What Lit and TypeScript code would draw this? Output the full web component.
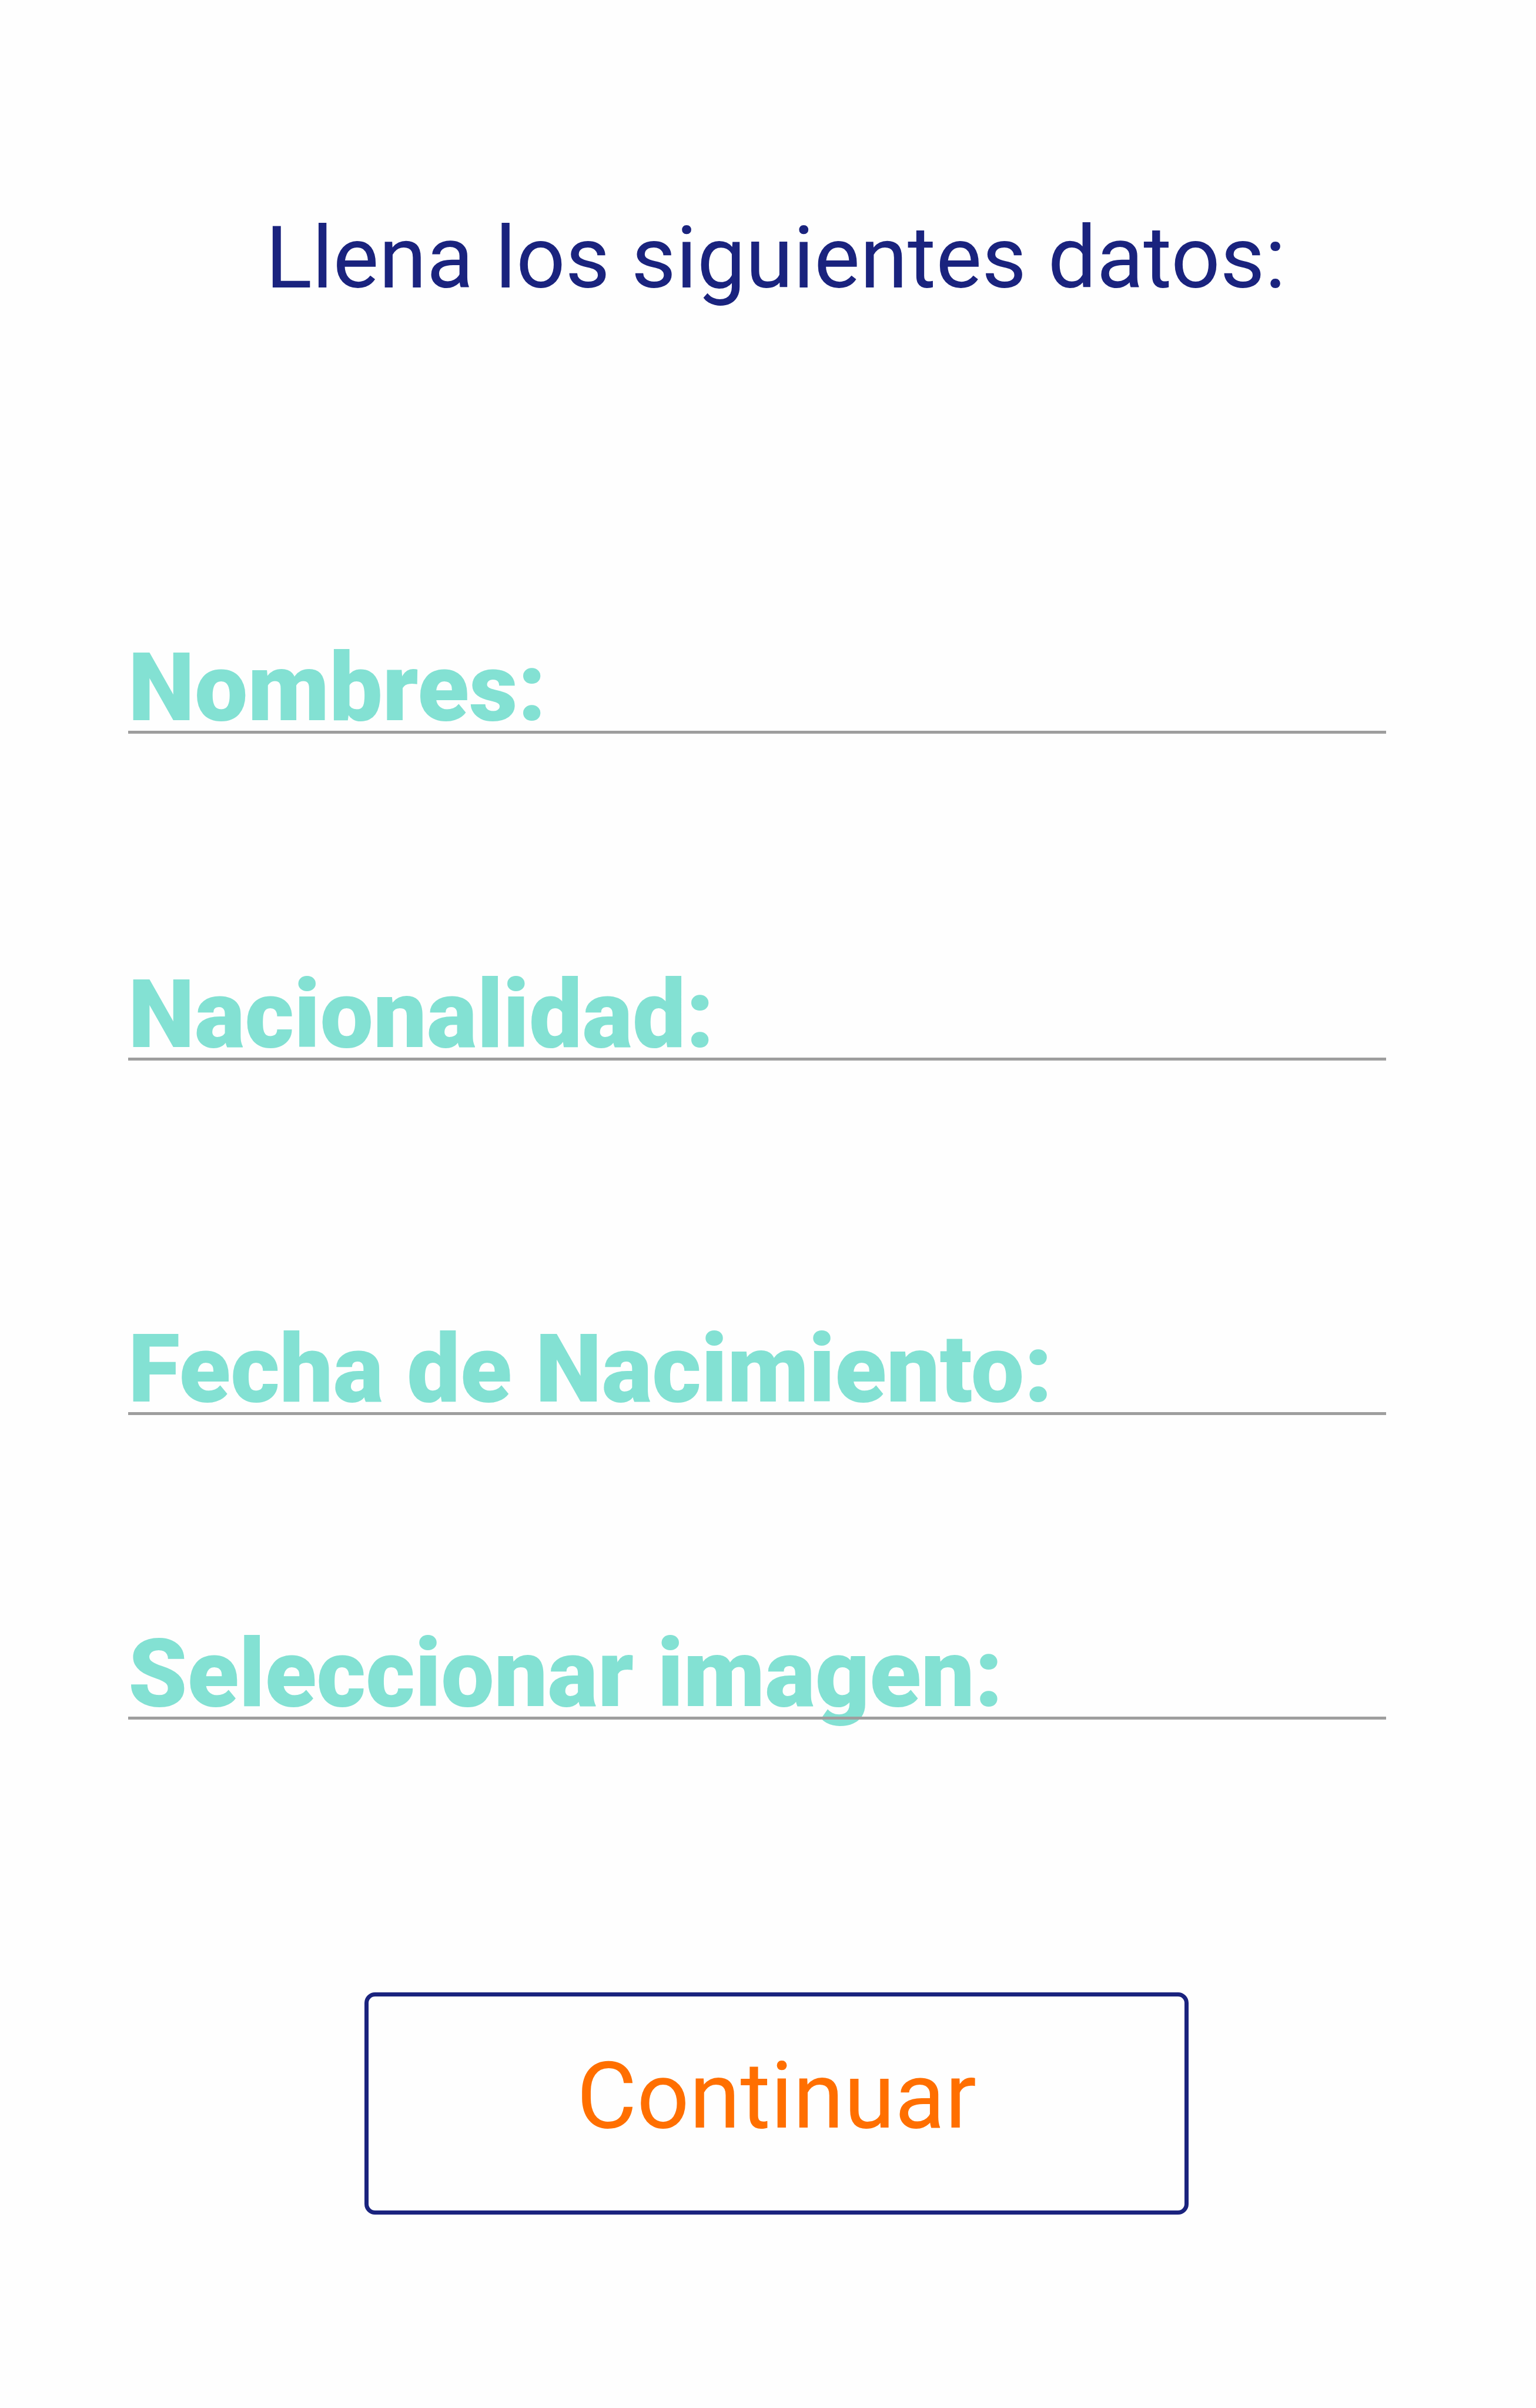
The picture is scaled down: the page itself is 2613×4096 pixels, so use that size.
import { LitElement, html, css } from "lit";
import { customElement } from "lit/decorators.js";

@customElement("app-root")
export class AppRoot extends LitElement {
  static styles = css`
    :host {
      display: block;
      min-height: 100vh;
      background: #fefefe;
      font-family: Roboto, "Liberation Sans", sans-serif;
    }
    .page {
      display: flex;
      flex-direction: column;
      padding-top: 354px;
    }
    .title {
      margin: 0;
      padding-left: 26px;
      font-size: 147px;
      line-height: 170px;
      font-weight: 400;
      text-align: center;
      color: #1a237e;
    }
    .form {
      display: flex;
      flex-direction: column;
      padding: 573px 255px 0 218px;
    }
    .field {
      display: grid;
      grid-template-columns: auto 1fr;
    }
    .field::after {
      content: "";
      grid-column: 1 / -1;
      height: 5px;
      background: #9e9e9e;
    }
    .label {
      font-size: 161px;
      line-height: 146px;
      font-weight: 900;
      color: #83e1d3;
      white-space: nowrap;
    }
    .input {
      min-width: 0;
      height: 146px;
      box-sizing: border-box;
      margin: 0;
      padding: 0 0 0 40px;
      border: 0;
      outline: 0;
      background: transparent;
      font: inherit;
      font-size: 147px;
      color: #1a237e;
    }
    .file {
      opacity: 0;
      cursor: pointer;
    }
    .nationality {
      margin-top: 405px;
    }
    .birth {
      margin-top: 452px;
    }
    .image {
      margin-top: 367px;
    }
    .submit {
      align-self: stretch;
      height: 378px;
      box-sizing: border-box;
      margin: 464px 336px 0 402px;
      padding: 0 0 26px;
      border: 7px solid #1a237e;
      border-radius: 18px;
      background: transparent;
      font-family: inherit;
      font-size: 157px;
      font-weight: 400;
      color: #ff6f00;
      cursor: pointer;
    }
  `;

  render() {
    return html`
      <main class="page">
        <h1 class="title">Llena los siguientes datos:</h1>
        <form class="form" @submit=${(e: Event) => e.preventDefault()}>
          <div class="field">
            <label class="label" for="names">Nombres:</label>
            <input class="input" id="names" type="text" autocomplete="given-name" />
          </div>
          <div class="field nationality">
            <label class="label" for="nationality">Nacionalidad:</label>
            <input class="input" id="nationality" type="text" />
          </div>
          <div class="field birth">
            <label class="label" for="birth">Fecha de Nacimiento:</label>
            <input class="input" id="birth" type="text" autocomplete="bday" />
          </div>
          <div class="field image">
            <label class="label" for="image">Seleccionar imagen:</label>
            <input class="input file" id="image" type="file" accept="image/*" />
          </div>
          <button class="submit" type="submit">Continuar</button>
        </form>
      </main>
    `;
  }
}
